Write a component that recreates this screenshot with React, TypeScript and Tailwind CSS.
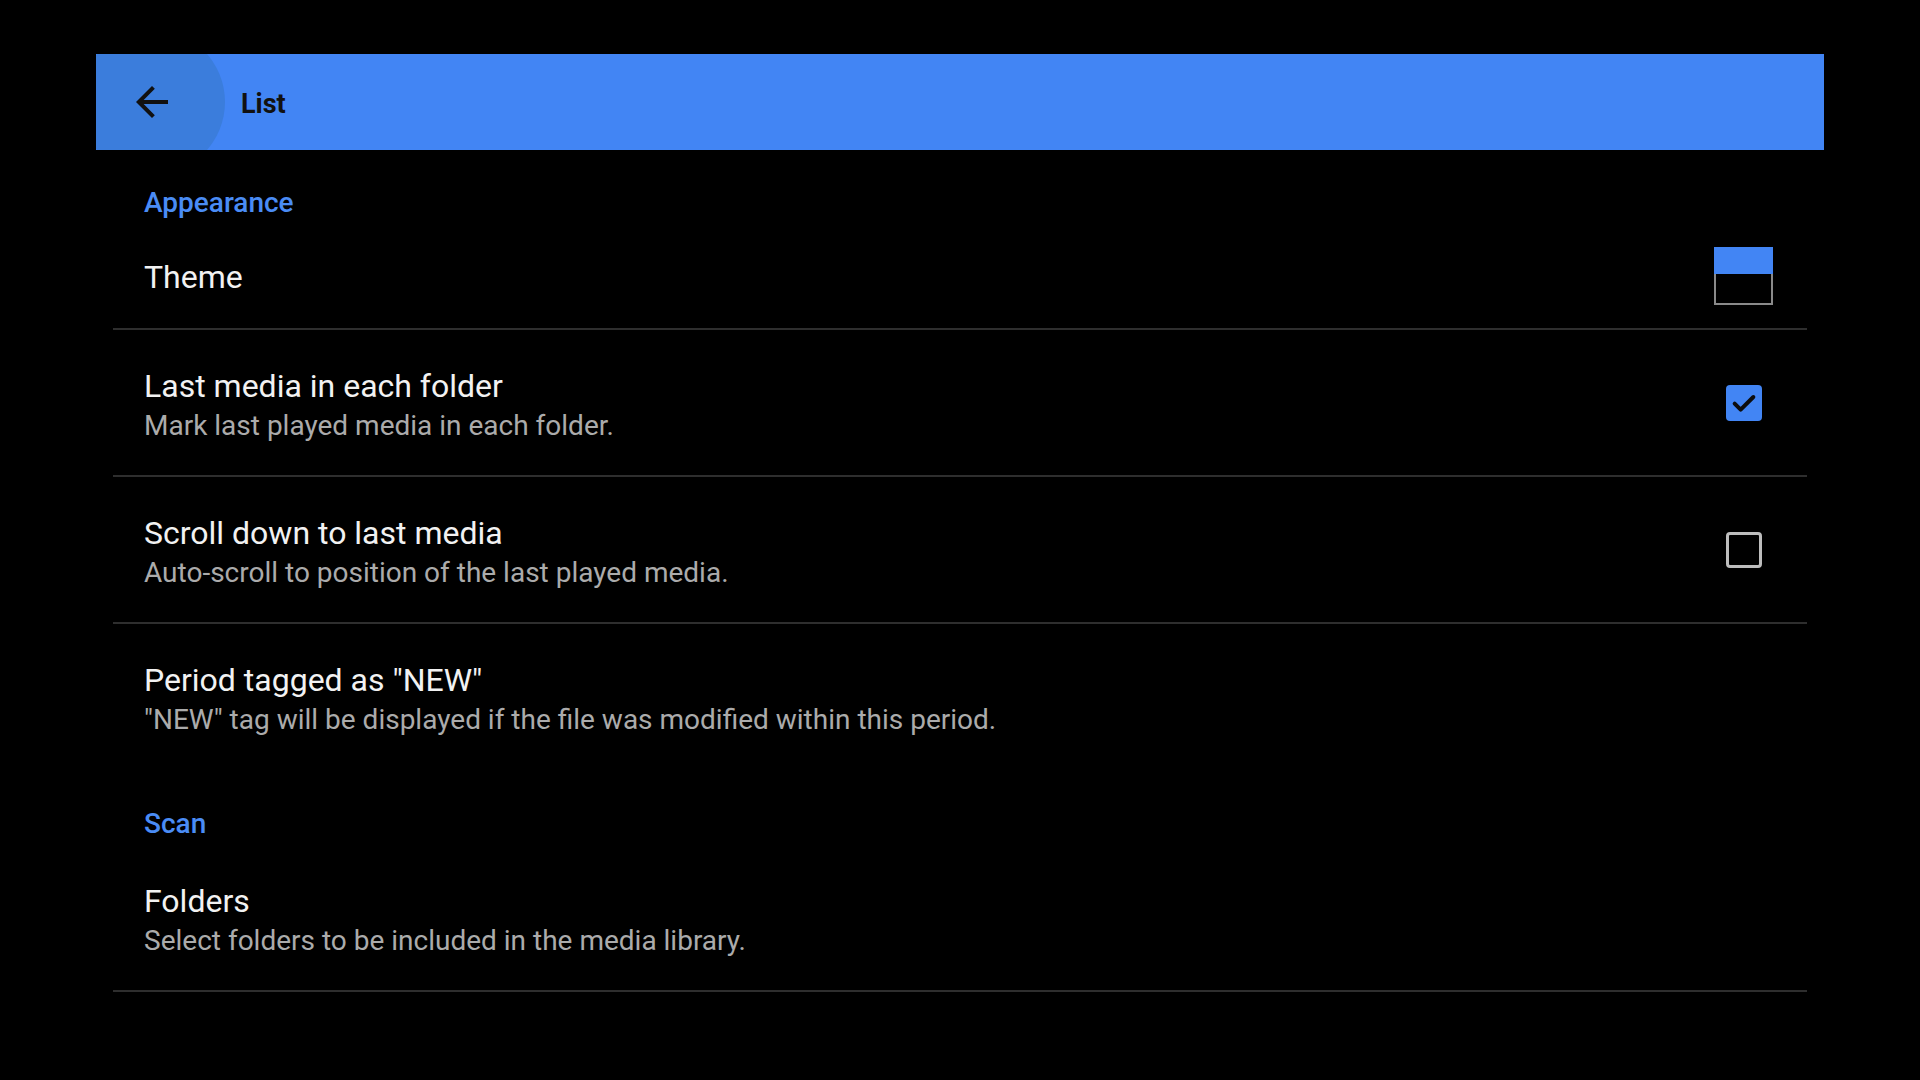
import React from 'react';

type Pref = {
  title: string;
  summary?: string;
  widget?: 'theme' | 'checked' | 'unchecked';
  divider?: boolean;
};

const appearance: Pref[] = [
  { title: 'Theme', widget: 'theme', divider: true },
  { title: 'Last media in each folder', summary: 'Mark last played media in each folder.', widget: 'checked', divider: true },
  { title: 'Scroll down to last media', summary: 'Auto-scroll to position of the last played media.', widget: 'unchecked', divider: true },
  { title: 'Period tagged as "NEW"', summary: '"NEW" tag will be displayed if the file was modified within this period.', divider: false },
];

const scan: Pref[] = [
  { title: 'Folders', summary: 'Select folders to be included in the media library.', divider: true },
];

function BackArrow() {
  return (
    <svg viewBox="0 0 24 24" className="w-12 h-12" fill="#111">
      <path d="M20 11H7.83l5.59-5.59L12 4l-8 8 8 8 1.41-1.41L7.83 13H20v-2z" />
    </svg>
  );
}

function Widget({ kind }: { kind?: Pref['widget'] }) {
  if (kind === 'theme') {
    return (
      <div className="w-[59px] h-[58px] border-2 border-[#8a8a8a] flex flex-col mr-[34px]">
        <div className="h-[27px] bg-[#4285f4] -mx-[2px] -mt-[2px]" />
        <div className="flex-1 bg-black" />
      </div>
    );
  }
  if (kind === 'checked') {
    return (
      <div className="w-9 h-9 rounded-[4px] bg-[#4285f4] flex items-center justify-center mr-[45px]">
        <svg viewBox="0 0 24 24" className="w-8 h-8" fill="none" stroke="#0d0d0d" strokeWidth="3" strokeLinecap="round" strokeLinejoin="round">
          <path d="M5 12.5l4.5 4.5L19 7.5" />
        </svg>
      </div>
    );
  }
  if (kind === 'unchecked') {
    return <div className="w-9 h-9 rounded-[4px] border-[3px] border-[#bdbdbd] mr-[45px]" />;
  }
  return null;
}

function Row({ pref, height }: { pref: Pref; height: string }) {
  return (
    <div className={`${height} flex items-center justify-between pl-[31px] border-b-2 ${pref.divider ? 'border-[#2e2e2e]' : 'border-transparent'}`}>
      <div className={`flex flex-col ${pref.summary ? 'pt-[6px]' : 'pt-[2px]'}`}>
        <span className="text-[32px] leading-[40px] text-[#f2f2f2]">{pref.title}</span>
        {pref.summary && <span className="text-[28px] leading-[40px] text-[#ababab]">{pref.summary}</span>}
      </div>
      <Widget kind={pref.widget} />
    </div>
  );
}

function Category({ label }: { label: string }) {
  return (
    <div className="h-[74px] pt-[35px] pl-[31px]">
      <span className="text-[28px] leading-[36px] font-medium text-[#4a8cf5]">{label}</span>
    </div>
  );
}

export default function App() {
  return (
    <div className="w-[1920px] h-[1080px] bg-black px-[96px] pt-[54px] overflow-hidden" style={{ fontFamily: 'Roboto, "Noto Sans", sans-serif' }}>
      <div className="h-[96px] bg-[#4285f4] flex items-center overflow-hidden relative">
        <div className="w-[146px] h-[146px] rounded-full bg-[#3b7ddc] -ml-[17px] shrink-0 flex items-center justify-center">
          <BackArrow />
        </div>
        <span className="ml-[16px] pt-[5px] text-[27px] font-bold text-[#111]">List</span>
      </div>

      <div className="mx-[17px]">
        <Category label="Appearance" />
        {appearance.map((p) => (
          <Row key={p.title} pref={p} height={p.widget === 'theme' ? 'h-[106px]' : 'h-[147px]'} />
        ))}
        <Category label="Scan" />
        {scan.map((p) => (
          <Row key={p.title} pref={p} height="h-[147px]" />
        ))}
      </div>
    </div>
  );
}
